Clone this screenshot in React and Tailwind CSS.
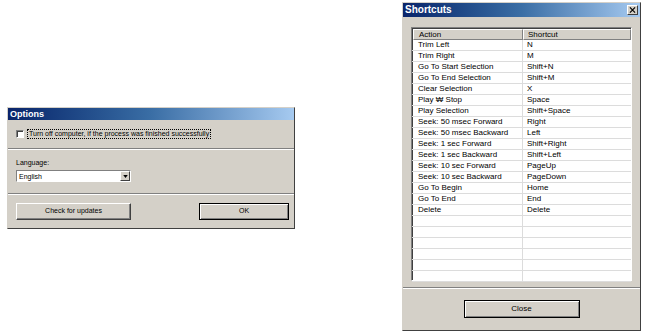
const shortcuts = [
  ["Trim Left", "N"],
  ["Trim Right", "M"],
  ["Go To Start Selection", "Shift+N"],
  ["Go To End Selection", "Shift+M"],
  ["Clear Selection", "X"],
  ["Play ₩ Stop", "Space"],
  ["Play Selection", "Shift+Space"],
  ["Seek: 50 msec Forward", "Right"],
  ["Seek: 50 msec Backward", "Left"],
  ["Seek: 1 sec Forward", "Shift+Right"],
  ["Seek: 1 sec Backward", "Shift+Left"],
  ["Seek: 10 sec Forward", "PageUp"],
  ["Seek: 10 sec Backward", "PageDown"],
  ["Go To Begin", "Home"],
  ["Go To End", "End"],
  ["Delete", "Delete"],
  ["", ""],
  ["", ""],
  ["", ""],
  ["", ""],
  ["", ""],
  ["", ""],
];

function TitleBar({ title, size, height, close }) {
  return (
    <div
      className={`flex items-center justify-between bg-linear-to-r from-[#0a246a] via-[#3a6ea5] to-[#a6caf0] px-[2px] ${height}`}
    >
      <span className={`font-bold text-white leading-none ${size}`}>{title}</span>
      {close && (
        <div className="flex h-[10px] w-[11px] items-center justify-center border border-t-white border-l-white border-r-[#404040] border-b-[#404040] bg-[#d4d0c8]">
          <svg viewBox="0 0 8 7" className="h-[6px] w-[7px]">
            <path d="M1 0.5 L7 6.5 M7 0.5 L1 6.5" stroke="#000" strokeWidth="1.4" />
          </svg>
        </div>
      )}
    </div>
  );
}

function Separator() {
  return <div className="h-[2px] border-t border-t-[#808080] border-b border-b-white" />;
}

function OptionsWindow() {
  return (
    <div className="absolute left-[7px] top-[107px] flex h-[122px] w-[288px] flex-col border border-t-[#d4d0c8] border-l-[#d4d0c8] border-r-[#404040] border-b-[#404040] bg-[#d4d0c8] text-[7px] text-black">
      <TitleBar title="Options" size="text-[9px]" height="h-[12px]" />
      <div className="flex h-[28px] items-center gap-[3px] pl-[8px]">
        <div className="h-[8px] w-[8px] border border-t-[#808080] border-l-[#808080] border-r-white border-b-white bg-white shadow-[inset_1px_1px_0_#404040]" />
        <span className="border border-dotted border-black px-[1px] leading-[8px]">
          Turn off computer, if the process was finished successfully
        </span>
      </div>
      <Separator />
      <div className="flex flex-col gap-[3px] px-[8px] pt-[9px]">
        <span className="leading-[8px]">Language:</span>
        <div className="flex h-[12px] w-[115px] items-center justify-between border border-t-[#808080] border-l-[#808080] border-r-white border-b-white bg-white pl-[2px]">
          <span className="leading-none">English</span>
          <div className="flex h-[10px] w-[10px] items-center justify-center border border-t-white border-l-white border-r-[#404040] border-b-[#404040] bg-[#d4d0c8]">
            <svg viewBox="0 0 6 4" className="h-[3px] w-[5px]">
              <path d="M0 0 H6 L3 4 Z" fill="#000" />
            </svg>
          </div>
        </div>
      </div>
      <div className="mt-[11px]">
        <Separator />
      </div>
      <div className="flex items-center justify-between pl-[8px] pr-[5px] pt-[8px]">
        <div className="flex h-[17px] w-[115px] items-center justify-center border border-t-white border-l-white border-r-[#404040] border-b-[#404040] shadow-[inset_-1px_-1px_0_#808080]">
          Check for updates
        </div>
        <div className="flex h-[17px] w-[90px] items-center justify-center border border-black shadow-[inset_1px_1px_0_#fff,inset_-1px_-1px_0_#808080]">
          OK
        </div>
      </div>
    </div>
  );
}

function ShortcutsWindow() {
  return (
    <div className="absolute left-[402px] top-[2px] flex h-[329px] w-[239px] flex-col border border-t-[#d4d0c8] border-l-[#d4d0c8] border-r-[#404040] border-b-[#404040] bg-[#d4d0c8] text-[8px] text-black">
      <TitleBar title="Shortcuts" size="text-[10px]" height="h-[14px]" close />
      <div className="mx-[8px] mt-[10px] h-[254px] border border-t-[#808080] border-l-[#808080] border-r-white border-b-white bg-white shadow-[inset_1px_1px_0_#404040]">
        <div className="flex h-[12px] pl-[1px] pt-[1px]">
          <div className="flex w-[110px] items-center border border-t-white border-l-white border-r-[#808080] border-b-[#808080] bg-[#d4d0c8] pl-[5px] leading-none">
            Action
          </div>
          <div className="flex flex-1 items-center border border-t-white border-l-white border-r-[#808080] border-b-[#808080] bg-[#d4d0c8] pl-[4px] leading-none">
            Shortcut
          </div>
        </div>
        {shortcuts.map(([action, key], i) => (
          <div key={i} className="flex h-[11px] border-b border-b-[#dcdcdc] pl-[1px]">
            <div className="flex w-[110px] items-center border-r border-r-[#dcdcdc] pl-[5px] leading-none">
              {action}
            </div>
            <div className="flex flex-1 items-center pl-[4px] leading-none">{key}</div>
          </div>
        ))}
      </div>
      <div className="mt-[6px]">
        <Separator />
      </div>
      <div className="flex justify-center pt-[11px]">
        <div className="flex h-[18px] w-[116px] items-center justify-center border border-black shadow-[inset_1px_1px_0_#fff,inset_-1px_-1px_0_#808080]">
          Close
        </div>
      </div>
    </div>
  );
}

export default function App() {
  return (
    <div
      className="relative h-[333px] w-[646px] overflow-hidden bg-white"
      style={{ fontFamily: '"Liberation Sans", Arial, sans-serif' }}
    >
      <OptionsWindow />
      <ShortcutsWindow />
    </div>
  );
}
